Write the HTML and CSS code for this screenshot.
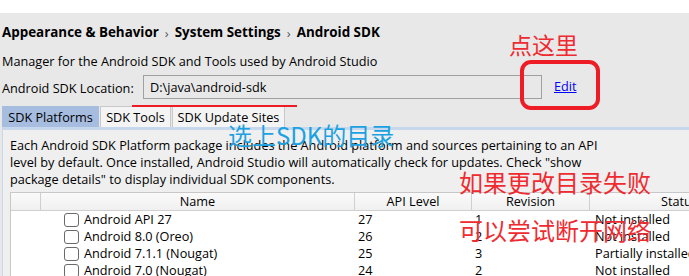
FILE: index.html
```html
<!DOCTYPE html>
<html lang="zh-CN">
<head>
    <meta charset="UTF-8">
    <title>Android SDK</title>
    <link rel="stylesheet" href="styles.css">
</head>
<body>

<div class="topbar"></div>

<div class="settings">
    <div class="breadcrumb">
        <b>Appearance &amp; Behavior</b>
        <span class="sep">&rsaquo;</span>
        <b>System Settings</b>
        <span class="sep">&rsaquo;</span>
        <b>Android SDK</b>
    </div>

    <p class="intro">Manager for the Android SDK and Tools used by Android Studio</p>

    <div class="location">
        <label>Android SDK Location:</label>
        <div class="path">D:\java\android-sdk</div>
        <a class="edit" href="#">Edit</a>
    </div>

    <div class="tabs">
        <div class="tab active">SDK Platforms</div>
        <div class="tab tools">SDK Tools</div>
        <div class="tab sites">SDK Update Sites</div>
    </div>

    <div class="panel">
        <p class="desc">Each Android SDK Platform package includes the Android platform and sources pertaining to an API
level by default. Once installed, Android Studio will automatically check for updates. Check "show
package details" to display individual SDK components.</p>

        <div class="table">
            <div class="row head">
                <div class="cell"></div>
                <div class="cell">Name</div>
                <div class="cell">API Level</div>
                <div class="cell">Revision</div>
                <div class="cell">Status</div>
            </div>
            <div class="row">
                <div class="cell"></div>
                <div class="cell name"><span class="check"></span>Android API 27</div>
                <div class="cell">27</div>
                <div class="cell">1</div>
                <div class="cell">Not installed</div>
            </div>
            <div class="row">
                <div class="cell"></div>
                <div class="cell name"><span class="check"></span>Android 8.0 (Oreo)</div>
                <div class="cell">26</div>
                <div class="cell">2</div>
                <div class="cell">Not installed</div>
            </div>
            <div class="row">
                <div class="cell"></div>
                <div class="cell name"><span class="check"></span>Android 7.1.1 (Nougat)</div>
                <div class="cell">25</div>
                <div class="cell">3</div>
                <div class="cell">Partially installed</div>
            </div>
            <div class="row">
                <div class="cell"></div>
                <div class="cell name"><span class="check"></span>Android 7.0 (Nougat)</div>
                <div class="cell">24</div>
                <div class="cell">2</div>
                <div class="cell">Not installed</div>
            </div>
        </div>
    </div>
</div>

<!-- 标注 -->
<div class="note note-click">点这里</div>
<div class="ring"></div>
<div class="underline"></div>
<div class="note note-dir">选上SDK的目录</div>
<div class="note note-fail">如果更改目录失败</div>
<div class="note note-net">可以尝试断开网络</div>

</body>
</html>
```

FILE: styles.css
```css
html, body {
    margin: 0;
    padding: 0;
    width: 689px;
    height: 276px;
    overflow: hidden;
}

body {
    position: relative;
    background-color: #e8e8e8;
    font-family: "Open Sans", "Noto Sans", sans-serif;
    font-size: 12.7px;
    color: #000;
}

.topbar {
    height: 13px;
    background-color: #fff;
}

.settings {
    padding: 0 0 0 2px;
}

.breadcrumb {
    display: flex;
    align-items: center;
    height: 38px;
    font-size: 13.4px;
    white-space: nowrap;
}

.breadcrumb b {
    font-weight: 700;
}

.sep {
    color: #555;
    font-size: 13px;
    margin: 2px 6px 0 6px;
}

.intro {
    margin: 0;
    height: 20px;
    line-height: 20px;
    white-space: nowrap;
}

.location {
    display: flex;
    align-items: center;
    height: 34px;
    white-space: nowrap;
}

.location label {
    width: 141px;
}

.path {
    width: 391px;
    height: 22px;
    line-height: 22px;
    border: 1px solid #a0a0a0;
    padding-left: 6px;
    margin-top: -2px;
}

.edit {
    margin-left: 12px;
    margin-top: -4px;
    color: #0000ff;
}

.tabs {
    display: flex;
    gap: 1px;
    height: 21px;
    margin-top: 1px;
    white-space: nowrap;
}

.tab {
    box-sizing: border-box;
    text-align: center;
    line-height: 20px;
    border: 1px solid #c8c8c8;
    border-bottom: none;
    background-color: #f4f4f4;
}

.tab.active {
    width: 97px;
    background-color: #a6bddf;
    border-color: #a6bddf;
}

.tab.tools {
    width: 71px;
}

.tab.sites {
    width: 113px;
}

.panel {
    border-top: 3px solid #c7d7ec;
    border-left: 1px solid #c7d7ec;
    background-color: #efefef;
    padding: 7px 0 0 7px;
}

.desc {
    margin: 0;
    white-space: pre-line;
    line-height: 17px;
}

.table {
    margin-top: 4px;
    background-color: #fff;
    border-top: 1px solid #c8c8c8;
    border-left: 1px solid #c8c8c8;
}

.row {
    display: grid;
    grid-template-columns: 30px 314px 117px 118px 180px;
    height: 17px;
    line-height: 17px;
    white-space: nowrap;
}

.row.head {
    height: 17px;
    line-height: 17px;
    background: linear-gradient(#fafafa, #f0f0f0);
    border-bottom: 1px solid #d0d0d0;
}

.row .cell:nth-child(3),
.row .cell:nth-child(4) {
    padding-left: 3px;
}

.row .cell:nth-child(5) {
    padding-left: 5px;
}

.row.head .cell {
    text-align: center;
    padding-left: 0;
    border-right: 1px solid #cfcfcf;
}

.name {
    display: flex;
    align-items: center;
    padding-left: 23px;
}

.check {
    box-sizing: border-box;
    width: 15px;
    height: 14px;
    border: 1px solid #6a6a6a;
    border-radius: 3px;
    background-color: #fff;
    margin-right: 5px;
}

/* 标注 */
.note {
    position: absolute;
    font-family: "Noto Sans CJK SC", sans-serif;
    line-height: 1;
    white-space: nowrap;
}

.note-click {
    left: 509px;
    top: 33px;
    font-size: 23px;
    color: #ef2b32;
}

.ring {
    position: absolute;
    left: 520px;
    top: 60px;
    width: 72px;
    height: 42px;
    border: 4px solid #ee1c24;
    border-radius: 11px;
}

.underline {
    position: absolute;
    left: 132px;
    top: 105px;
    width: 165px;
    height: 2px;
    background-color: #ee1c24;
}

.note-dir {
    left: 228px;
    top: 123px;
    font-size: 24px;
    color: #1ca2e2;
}

.note-fail {
    left: 459px;
    top: 170px;
    font-size: 24px;
    color: #ef2b32;
}

.note-net {
    left: 459px;
    top: 218px;
    font-size: 24px;
    color: #ef2b32;
}
```
